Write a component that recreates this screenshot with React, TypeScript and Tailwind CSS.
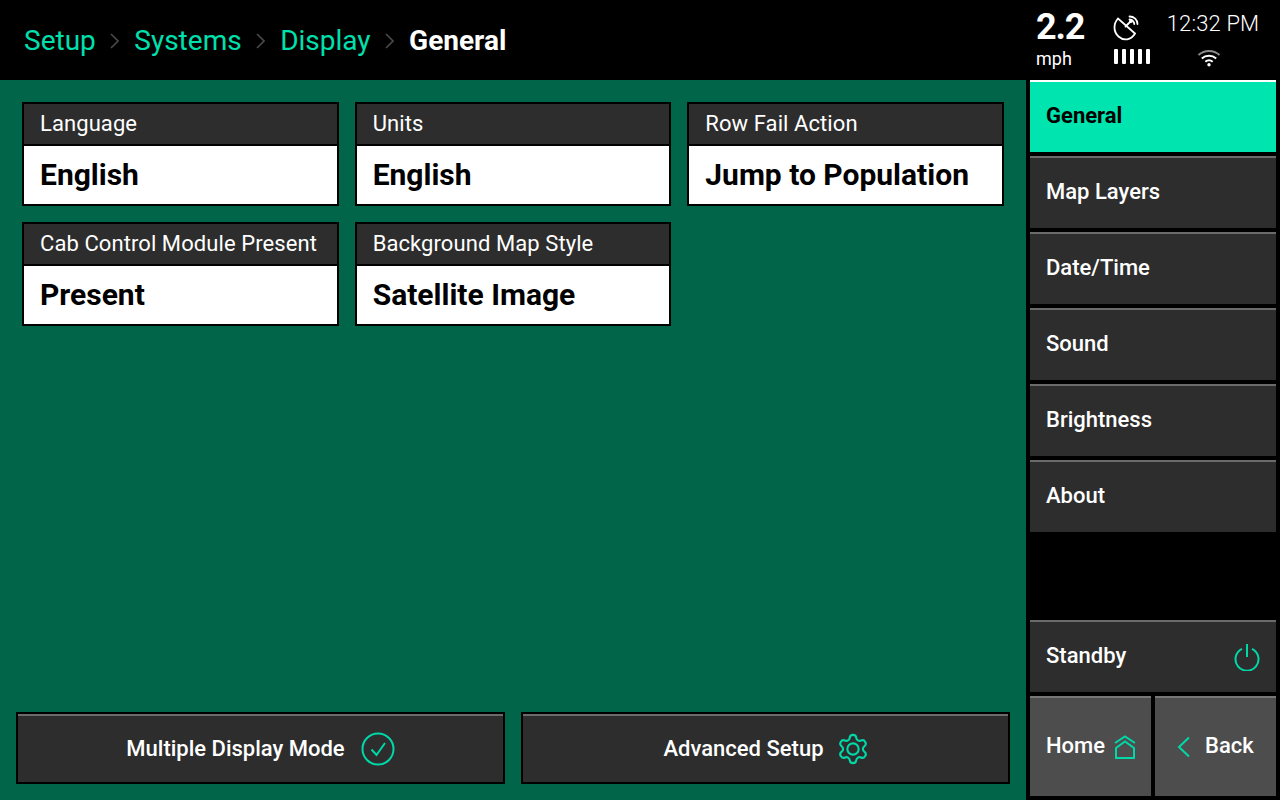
import React from "react";

const fields = [
  { label: "Language", value: "English" },
  { label: "Units", value: "English" },
  { label: "Row Fail Action", value: "Jump to Population" },
  { label: "Cab Control Module Present", value: "Present" },
  { label: "Background Map Style", value: "Satellite Image" },
];

const menu = ["Map Layers", "Date/Time", "Sound", "Brightness", "About"];

function Crumb({ label }: { label: string }) {
  return (
    <>
      <span className="text-[#00e0ae]">{label}</span>
      <svg viewBox="0 0 9 16" className="w-[9px] h-[16px] ml-[14.5px] mr-[15px] mb-[1px]" fill="none" stroke="#4a4a4a" strokeWidth="1.6">
        <path d="M1 1l7 7-7 7" />
      </svg>
    </>
  );
}

function StatusBlock() {
  return (
    <div className="flex items-start h-full text-white">
      <div className="w-[72px] pt-[7px] pl-[1px]">
        <div className="text-[36px] leading-[40px] font-bold tracking-[-1.2px]">2.2</div>
        <div className="text-[18px] leading-[22px] mt-[1px]">mph</div>
      </div>
      <div className="w-[52px] flex flex-col items-start pt-[15px] ml-[6px]">
        <svg viewBox="0 0 26 26" className="w-[26px] h-[26px]" fill="none" stroke="white" strokeWidth="1.8" strokeLinecap="round">
          <path d="M5 3.500C0 9 0.500 17 5.500 21.500S18 25.500 22 18.500z" />
          <path d="M12.500 11.500l5-5" />
          <circle cx="18" cy="6" r="1" fill="white" />
          <path d="M16.500 1.500c4.500 0 8 3 8 7.500" />
          <path d="M16.500 4.500c2.500 0 4.800 2 4.800 4.500" />
        </svg>
        <div className="flex gap-[4px] mt-[8px] ml-[1px]">
          {[0, 1, 2, 3, 4].map((i) => (
            <div key={i} className="w-[4px] h-[15px] bg-white rounded-[1px]" />
          ))}
        </div>
      </div>
      <div className="flex flex-col items-center ml-[1px] pt-[9px] w-[94px]">
        <div className="text-[22px] leading-[30px] font-light tracking-[0.15px] whitespace-nowrap">12:32 PM</div>
        <svg viewBox="0 0 24 18" className="w-[24px] h-[18px] mt-[10px] mr-[9px]" fill="none" stroke="white" strokeWidth="2">
          <path d="M1.500 6c6-5.300 15-5.300 21 0" stroke="#8a8a8a" />
          <path d="M4.800 9.500c4-3.600 10.400-3.600 14.400 0" />
          <path d="M8.300 12.800c2.200-1.800 5.200-1.800 7.400 0" />
          <circle cx="12" cy="15.800" r="1.700" fill="white" stroke="none" />
        </svg>
      </div>
    </div>
  );
}

function FieldCard({ label, value }: { label: string; value: string }) {
  return (
    <div className="h-[104px] border-2 border-black flex flex-col">
      <div className="h-[42px] bg-[#2d2d2d] border-b-2 border-black pl-[16px] pb-[2px] flex items-center text-[22px] tracking-[0.08px] text-white whitespace-nowrap">
        {label}
      </div>
      <div className="flex-1 bg-white pl-[16px] pb-[2px] flex items-center text-[30px] font-bold text-black whitespace-nowrap">
        {value}
      </div>
    </div>
  );
}

function MenuItem({ label }: { label: string }) {
  return (
    <div className="h-[72px] bg-[#2d2d2d] border-t-2 border-[#6b6b6b] pl-[16px] pb-[4px] flex items-center text-[22px] font-medium text-white">
      {label}
    </div>
  );
}

function ActionButton({ label, className, children }: { label: string; className: string; children: React.ReactNode }) {
  return (
    <div className="h-[72px] border-2 border-black bg-[#2d2d2d] flex flex-col">
      <div className="h-[2px] bg-[#6b6b6b]" />
      <div className={"flex-1 flex items-center justify-center text-[22px] font-medium text-white " + className}>
        <span className="mb-[2px]">{label}</span>
        {children}
      </div>
    </div>
  );
}

export default function App() {
  return (
    <div className="w-[1280px] h-[800px] bg-black overflow-hidden flex flex-col font-['Roboto',sans-serif]">
      <div className="h-[80px] flex justify-between shrink-0">
        <div className="flex items-center pl-[24px] pt-[2px] text-[28px]">
          <Crumb label="Setup" />
          <Crumb label="Systems" />
          <Crumb label="Display" />
          <span className="font-bold text-white">General</span>
        </div>
        <div className="mr-[20px]">
          <StatusBlock />
        </div>
      </div>

      <div className="flex-1 flex">
        <div className="w-[1026px] bg-[#006549] flex flex-col justify-between pt-[22px] pb-[16px] px-[16px]">
          <div className="grid grid-cols-3 gap-[16px] mx-[6px]">
            {fields.map((f) => (
              <FieldCard key={f.label} label={f.label} value={f.value} />
            ))}
          </div>
          <div className="grid grid-cols-2 gap-[16px]">
            <ActionButton label="Multiple Display Mode" className="gap-[16px]">
              <svg viewBox="0 0 34 34" className="w-[34px] h-[34px]" fill="none" stroke="#00d8a8" strokeWidth="2">
                <circle cx="17" cy="17" r="15.500" />
                <path d="M10.500 17.500l5 5.500 8.500-12" />
              </svg>
            </ActionButton>
            <ActionButton label="Advanced Setup" className="gap-[12px] pl-[2px]">
              <svg viewBox="0 0 24 24" className="w-[34px] h-[34px]" fill="none" stroke="#00d8a8" strokeWidth="1.500" strokeLinejoin="round">
                <path d="M9.671 4.136a2.34 2.34 0 0 1 4.659 0 2.34 2.34 0 0 0 3.319 1.915 2.34 2.34 0 0 1 2.33 4.033 2.34 2.34 0 0 0 0 3.831 2.34 2.34 0 0 1-2.33 4.033 2.34 2.34 0 0 0-3.319 1.915 2.34 2.34 0 0 1-4.659 0 2.34 2.34 0 0 0-3.32-1.915 2.34 2.34 0 0 1-2.33-4.033 2.34 2.34 0 0 0 0-3.831A2.34 2.34 0 0 1 6.35 6.051a2.34 2.34 0 0 0 3.319-1.915" />
                <circle cx="12" cy="12" r="4" />
              </svg>
            </ActionButton>
          </div>
        </div>

        <div className="flex-1 flex flex-col pl-[4px] pr-[4px] pb-[4px]">
          <div className="h-[72px] bg-[#00e5b0] border-t-2 border-white pl-[16px] pb-[4px] flex items-center text-[22px] font-bold text-black">
            General
          </div>
          <div className="flex flex-col gap-[4px] mt-[4px]">
            {menu.map((m) => (
              <MenuItem key={m} label={m} />
            ))}
          </div>
          <div className="mt-auto h-[72px] bg-[#2d2d2d] border-t-2 border-[#6b6b6b] pl-[16px] pr-[16px] flex items-center justify-between text-[22px] font-medium text-white">
            <span className="mb-[4px]">Standby</span>
            <svg viewBox="0 0 26 28" className="w-[26px] h-[28px]" fill="none" stroke="#00d8a8" strokeWidth="2">
              <path d="M13 1v13" />
              <path d="M8 5.800a11.500 11.500 0 1 0 10 0" />
            </svg>
          </div>
          <div className="grid grid-cols-2 gap-[4px] mt-[4px] h-[100px]">
            <div className="bg-[#4d4d4d] border-t-2 border-[#777777] pl-[16px] flex items-center gap-[9px] text-[22px] font-medium text-white">
              <span className="mb-[4px]">Home</span>
              <svg viewBox="0 0 22 24" className="w-[22px] h-[24px]" fill="none" stroke="#00d8a8" strokeWidth="2">
                <path d="M1 8L11 1.500 21 8" />
                <path d="M2 23V13L11 6.500 20 13V23z" />
              </svg>
            </div>
            <div className="bg-[#4d4d4d] border-t-2 border-[#777777] pl-[22px] flex items-center gap-[15px] text-[22px] font-medium text-white">
              <svg viewBox="0 0 13 22" className="w-[13px] h-[22px]" fill="none" stroke="#00d8a8" strokeWidth="2">
                <path d="M12 1.500L2 11l10 9.500" />
              </svg>
              <span className="mb-[4px]">Back</span>
            </div>
          </div>
        </div>
      </div>
    </div>
  );
}
